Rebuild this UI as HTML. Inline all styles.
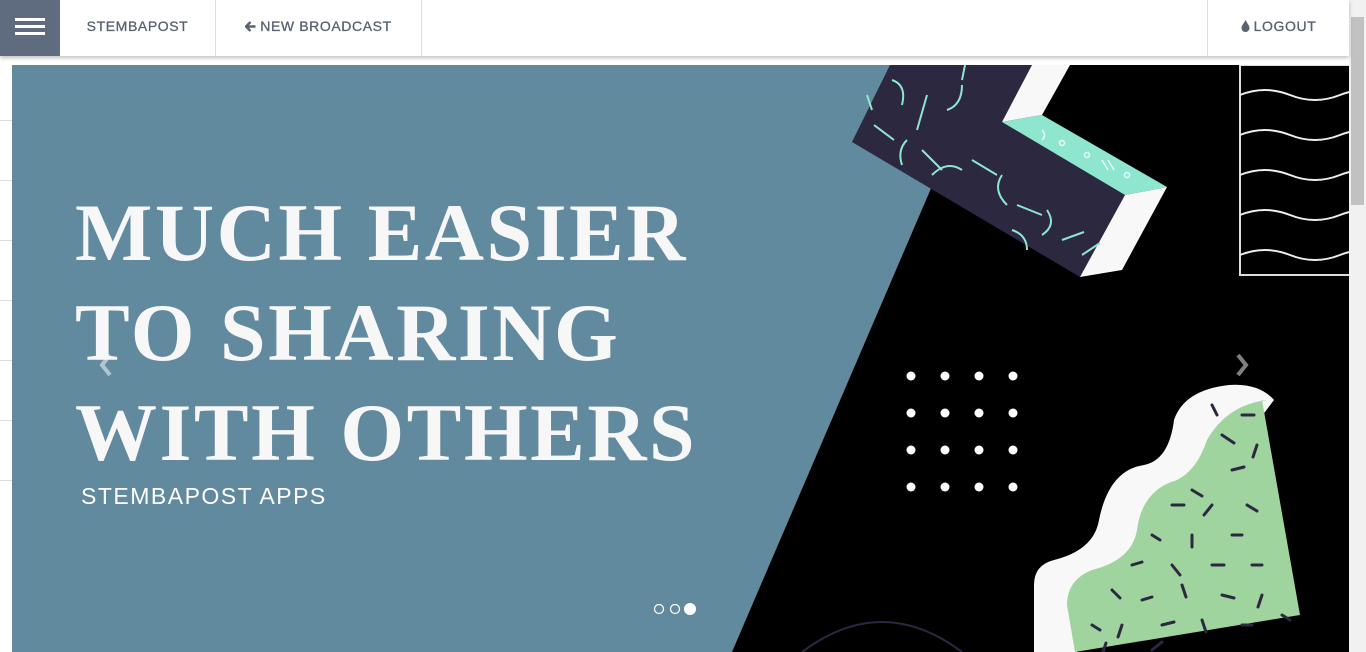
<!DOCTYPE html>
<html><head><meta charset="utf-8"><style>
*{margin:0;padding:0;box-sizing:border-box}
body{width:1366px;height:652px;overflow:hidden;background:#fff;font-family:"Liberation Sans",sans-serif;position:relative}
.nav{position:absolute;left:0;top:0;width:1349px;height:56px;background:#fff;box-shadow:0 2px 4px rgba(0,0,0,.25);z-index:5}
.ham{position:absolute;left:0;top:0;width:60px;height:56px;background:#5f6b7e}
.ham i{position:absolute;left:15px;width:30px;height:3px;background:#fff}
.item{position:absolute;top:0;height:56px;line-height:52px;color:#5a6270;font-size:14px;letter-spacing:0.6px;text-align:center;border-right:1px solid #ddd;-webkit-text-stroke:0.3px #5a6270}
.item svg{vertical-align:-1px;margin-right:4px}
.side{position:absolute;left:0;width:12px;height:1px;background:#ddd}
.slide{position:absolute;left:12px;top:65px;width:1337px;height:587px;background:#628a9e;overflow:hidden}
h1{position:absolute;left:63px;top:118px;font-family:"Liberation Serif",serif;font-weight:bold;color:#f7f7f7;font-size:82px;line-height:100px;letter-spacing:2.5px}
.sub{position:absolute;left:69px;top:418px;color:#fff;font-size:23px;letter-spacing:1.5px}
.sb{position:absolute;left:1349px;top:0;width:17px;height:652px;background:#f1f1f1}
.thumb{position:absolute;left:1351px;top:17px;width:13px;height:188px;background:#c1c1c1}
</style></head><body>
<div class="nav">
<div class="ham"><i style="top:18px"></i><i style="top:25px"></i><i style="top:32px"></i></div>
<div class="item" style="left:60px;width:156px">STEMBAPOST</div>
<div class="item" style="left:216px;width:206px"><svg width="11" height="11" viewBox="0 0 11 11"><path d="M5.5 1 L1 5.5 L5.5 10 M1.5 5.5 H10.5" stroke="#5a6270" stroke-width="2.4" fill="none"/></svg>NEW BROADCAST</div>
<div class="item" style="left:1207px;width:142px;border-right:none;border-left:1px solid #ddd"><svg width="9" height="12" viewBox="0 0 9 12"><path d="M4.5 0 C3 3 0.5 5.5 0.5 8 A4 4 0 0 0 8.5 8 C8.5 5.5 6 3 4.5 0Z" fill="#5a6270"/></svg>LOGOUT</div>
</div>
<div class="side" style="top:120px"></div><div class="side" style="top:180px"></div><div class="side" style="top:240px"></div><div class="side" style="top:300px"></div><div class="side" style="top:360px"></div><div class="side" style="top:420px"></div><div class="side" style="top:480px"></div>
<div class="slide">
<svg width="1337" height="587" style="position:absolute;left:0;top:0">
<polygon points="972,0 1337,0 1337,587 720,587" fill="#000"/>
<polygon points="878,0 1020,0 990,57 1113,130 1068,212 840,77" fill="#2b2840"/>
<polygon points="1020,0 1058,0 1030,50 990,57" fill="#f8f8f8"/>
<polygon points="990,57 1030,50 1155,122 1113,130" fill="#8ee6cf"/>
<polygon points="1113,130 1155,122 1110,205 1068,212" fill="#f8f8f8"/>
<g stroke="#8ee6cf" stroke-width="2" fill="none">
<path d="M880 15 q15 5 10 25"/><path d="M905 65 l10 -35"/><path d="M935 45 q15 -5 15 -25"/><path d="M862 60 l20 15"/><path d="M890 100 q-5 -15 5 -25"/><path d="M910 85 l20 20"/><path d="M920 110 q15 -15 30 -5"/><path d="M960 95 l25 15"/><path d="M990 110 q-10 15 5 30"/><path d="M1005 140 l25 10"/><path d="M1035 145 q10 15 -5 25"/><path d="M1050 175 l22 -8"/><path d="M1000 165 q15 5 15 20"/><path d="M1070 190 l18 -12"/><path d="M950 15 l3 -15"/><path d="M855 30 l5 15"/>
</g>
<g stroke="#eafaf5" stroke-width="1.5" fill="none"><circle cx="1050" cy="78" r="2.5"/><circle cx="1075" cy="90" r="2.5"/><path d="M1090 95 l6 10 M1096 95 l6 10"/><circle cx="1115" cy="110" r="2.5"/><path d="M1030 65 q5 5 0 10"/></g>
<rect x="1228" y="0" width="120" height="210" fill="none" stroke="#ddd" stroke-width="2"/>
<g stroke="#eee" stroke-width="2" fill="none">
<path d="M1228 30 q25 -10 50 0 t50 0 t50 0"/><path d="M1228 70 q25 -10 50 0 t50 0 t50 0"/><path d="M1228 110 q25 -10 50 0 t50 0 t50 0"/><path d="M1228 150 q25 -10 50 0 t50 0 t50 0"/><path d="M1228 190 q25 -10 50 0 t50 0 t50 0"/>
</g>
<g fill="#fff">
<circle cx="899" cy="311" r="4.5"/><circle cx="933" cy="311" r="4.5"/><circle cx="967" cy="311" r="4.5"/><circle cx="1001" cy="311" r="4.5"/>
<circle cx="899" cy="348" r="4.5"/><circle cx="933" cy="348" r="4.5"/><circle cx="967" cy="348" r="4.5"/><circle cx="1001" cy="348" r="4.5"/>
<circle cx="899" cy="385" r="4.5"/><circle cx="933" cy="385" r="4.5"/><circle cx="967" cy="385" r="4.5"/><circle cx="1001" cy="385" r="4.5"/>
<circle cx="899" cy="422" r="4.5"/><circle cx="933" cy="422" r="4.5"/><circle cx="967" cy="422" r="4.5"/><circle cx="1001" cy="422" r="4.5"/>
</g>
<path d="M1022 520 q0 -20 20 -25 q40 -10 45 -40 q10 -50 45 -55 q25 -5 30 -45 q10 -30 55 -35 q30 -2 45 15 L1160 470 L1065 587 L1022 587 Z" fill="#f8f8f8"/>
<path d="M1250 335 L1288 550 L1063 587 L1055 540 q0 -25 25 -35 q40 -10 45 -40 q5 -40 40 -50 q20 -10 30 -40 q20 -35 60 -40 Z" fill="#9fd49e"/>
<g stroke="#2b2840" stroke-width="3" stroke-linecap="round">
<path d="M1200 340 l5 10"/><path d="M1230 350 l12 0"/><path d="M1210 370 l12 8"/><path d="M1245 380 l-4 12"/><path d="M1220 405 l12 -3"/><path d="M1180 425 l10 6"/><path d="M1160 440 l12 0"/><path d="M1200 440 l-8 10"/><path d="M1235 440 l10 6"/><path d="M1140 470 l8 5"/><path d="M1180 470 l0 12"/><path d="M1220 470 l10 0"/><path d="M1120 500 l10 -3"/><path d="M1160 500 l8 10"/><path d="M1200 500 l12 0"/><path d="M1240 500 l10 0"/><path d="M1100 525 l8 8"/><path d="M1130 535 l10 -3"/><path d="M1170 520 l4 12"/><path d="M1210 530 l12 3"/><path d="M1250 530 l-4 12"/><path d="M1080 560 l8 5"/><path d="M1110 560 l-4 12"/><path d="M1150 560 l12 -3"/><path d="M1190 555 l4 12"/><path d="M1230 560 l10 0"/><path d="M1270 550 l8 5"/><path d="M1090 590 l4 -12"/><path d="M1140 585 l10 -8"/>
</g>
<path d="M790 587 q80 -60 160 0" fill="none" stroke="#2b2840" stroke-width="2"/>
<path d="M98 290 l-8 10 l8 10" fill="none" stroke="rgba(255,255,255,.5)" stroke-width="4"/>
<path d="M1226 290 l8 10 l-8 10" fill="none" stroke="rgba(255,255,255,.5)" stroke-width="4"/>
<circle cx="647" cy="544" r="4.5" fill="none" stroke="#fff" stroke-width="1.2"/>
<circle cx="663" cy="544" r="4.5" fill="none" stroke="#fff" stroke-width="1.2"/>
<circle cx="678" cy="544" r="6" fill="#fff"/>
</svg>
<h1>MUCH EASIER<br>TO SHARING<br>WITH OTHERS</h1>
<div class="sub">STEMBAPOST APPS</div>
</div>
<div class="sb"></div><div class="thumb"></div>
</body></html>
